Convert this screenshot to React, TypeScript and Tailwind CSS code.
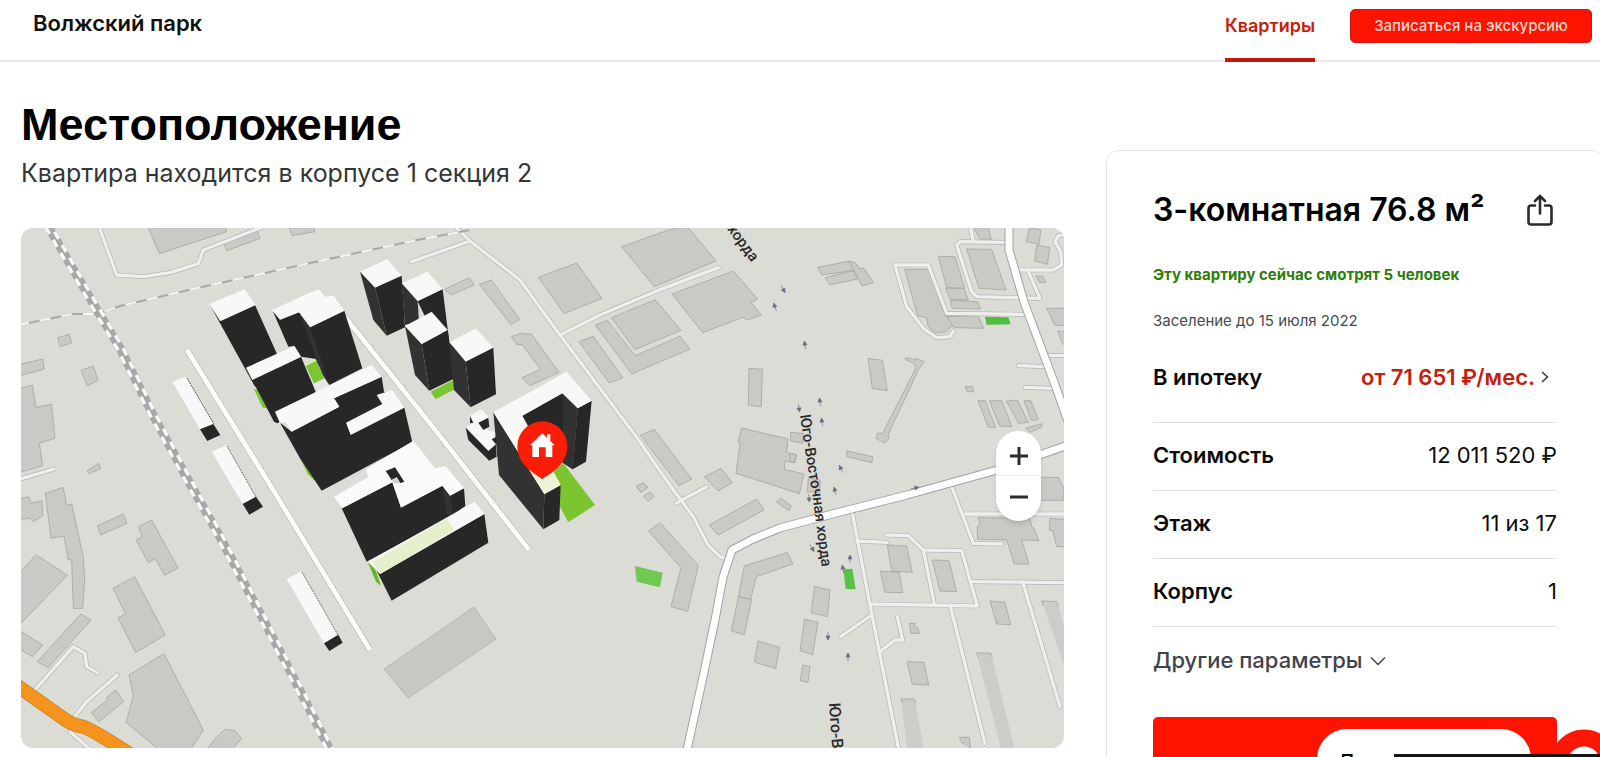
import React from "react";

type Lines = string[];

/* Map pieces are digitised on tiles drawn at three units per map pixel. */
function Tile({ x, y, children }: { x: number; y: number; children: React.ReactNode }) {
  return <g transform={`translate(${x} ${y}) scale(0.33333)`}>{children}</g>;
}

const buildingTiles: { x: number; y: number; shapes: Lines }[] = [
  {
    x: 20, y: 225, shapes: [
      "385,8 418,86 620,20 616,8", "612,56 712,17 720,40 620,77", "808,8 816,32 885,20 880,8",
      "113,338 148,328 155,354 120,365", "183,436 220,423 234,466 202,483", "0,418 68,402 73,432 0,452",
      "0,490 37,480 48,547 95,538 105,640 58,655 68,722 0,742", "201,737 237,715 242,731 208,746",
    ],
  },
  {
    x: 20, y: 480, shapes: [
      "76,40 130,22 140,76 155,72 190,230 194,300 188,385 160,385 155,240 144,238 132,168 93,175",
      "0,56 27,50 33,70 66,62 68,108 40,125 28,115 0,118", "232,137 310,102 321,130 242,165",
      "355,140 395,120 474,264 434,286 406,236 385,248 348,180 367,170",
      "279,325 344,290 436,465 347,518 294,413 317,402", "0,278 48,224 142,286 0,433",
      "52,545 182,402 213,420 85,563", "0,453 68,495 37,530 0,508",
      "327,585 432,521 550,750 510,812 420,812 318,727 340,648",
      "214,698 262,660 260,652 288,630 311,665 236,726", "562,806 590,770 615,748 645,752 664,775 640,806",
    ],
  },
  {
    x: 520, y: 225, shapes: [
      "305,65 440,17 480,8 505,8 588,108 403,185", "55,157 170,114 246,220 132,266",
      "456,207 640,138 713,222 693,232 724,270 683,285 668,277 548,323", "274,278 406,224 483,316 345,374",
      "226,300 262,286 345,392 480,334 510,372 335,447", "177,350 220,334 308,458 268,474",
      "687,430 727,433 724,545 685,541", "361,631 403,613 515,762 477,782",
      "665,609 804,642 800,682 830,690 824,713 795,708 793,733 852,747 838,806 648,745 660,655 654,650",
      "553,755 603,730 637,773 594,798", "351,787 372,775 383,787 362,800", "812,622 850,625 848,655 812,648",
      "371,814 390,801 403,815 385,828",
    ],
  },
  {
    x: 350, y: 240, shapes: [
      "284,148 358,113 372,135 303,165", "388,133 424,120 509,238 483,254",
      "484,290 512,280 545,283 627,397 540,437 516,413 571,388 517,314 500,313",
    ],
  },
  {
    x: 790, y: 225, shapes: [
      "83,127 180,108 202,135 96,150", "105,158 190,137 202,162 120,180", "178,110 195,112 208,130 222,130 250,173 216,183",
      "344,133 417,133 465,272 490,280 488,300 470,320 430,325 413,300 410,278 383,273",
      "445,94 495,95 524,190 470,188", "466,190 522,190 535,225 480,222", "480,225 563,230 572,252 487,250",
      "470,275 565,272 581,310 492,308", "530,72 605,73 648,195 567,190", "552,8 595,8 604,43 568,42",
      "718,8 753,15 747,58 709,50", "740,60 780,68 772,118 734,108", "738,153 758,153 767,173 747,172",
      "770,250 826,250 826,302 794,300", "803,318 826,320 826,365 815,350", "234,400 277,406 292,497 247,491",
      "345,400 360,398 370,405 378,400 402,410 385,435 295,628 296,640 285,655 258,640 262,625 278,625 378,428 372,415 348,405",
      "170,678 248,695 246,713 171,695", "525,485 547,485 551,500 531,500", "564,527 586,527 617,607 595,607",
      "598,527 635,527 666,605 629,603", "649,528 682,525 715,592 686,595", "702,527 722,527 745,583 724,587",
      "707,610 755,596 755,606 720,622", "0,685 18,688 14,712 0,712", "55,758 90,765 90,803 52,800",
      "745,757 805,757 822,790 822,826 745,826",
    ],
  },
  {
    x: 580, y: 480, shapes: [
      "388,135 530,57 552,90 415,165", "205,153 240,128 355,256 323,394 273,380 303,263",
      "590,67 602,54 634,78 627,92", "493,257 622,218 639,252 529,290 512,358 475,350",
      "475,350 515,358 493,464 454,453", "534,483 599,502 587,566 523,546", "704,319 750,330 742,410 693,398",
      "674,417 714,427 698,524 660,512", "668,555 690,560 684,607 661,602", "170,18 190,8 202,24 182,37",
    ],
  },
  {
    x: 800, y: 480, shapes: [
      "262,195 320,198 337,277 275,273", "241,273 298,277 308,338 255,337", "397,240 447,242 470,335 420,333",
      "570,363 615,367 632,434 590,432", "321,545 372,547 386,615 337,613", "478,772 508,772 512,808 500,795 487,790",
      "328,430 345,430 345,442 354,445 358,460 333,460",
      "535,113 690,115 695,140 702,145 717,182 665,180 687,252 643,252 620,180 533,178 531,140 540,135",
      "750,115 796,118 796,200 770,200 758,152 748,150",
    ],
  },
];

const minorRoads: { x: number; y: number; lines: Lines }[] = [
  { x: 20, y: 225, lines: ["235,0 290,150 370,155 450,143 535,116 550,75 730,5", "0,762 102,732"] },
  { x: 20, y: 480, lines: ["40,635 160,500 195,520 200,560 232,578", "160,715 200,665 292,585", "150,755 215,812"] },
  {
    x: 350, y: 240, lines: [
      "185,65 360,3 510,120 630,285 855,585 970,750 1030,830 1074,915 1110,950 1131,958",
      "360,3 315,-40", "630,285 750,225 915,155 1105,83", "978,790 1070,740",
    ],
  },
  {
    x: 790, y: 225, lines: [
      "315,120 415,120 470,265 700,268", "315,120 350,245 400,310 440,338 480,335 490,318",
      "645,52 510,50 500,60 545,200 560,215 750,220 715,140", "685,135 790,135 815,120 812,80 795,50 805,32 826,30",
      "540,0 550,48", "685,422 765,425", "705,487 790,490", "775,392 826,392",
    ],
  },
  {
    x: 800, y: 480, lines: [
      "157,100 215,400 297,812", "170,183 262,187", "260,165 325,167 370,210 485,212 532,378 210,372",
      "370,210 403,372", "450,375 555,790", "510,305 796,308", "668,305 780,680", "215,405 122,470",
      "240,515 285,480 308,480 292,410", "455,20 520,190 605,192", "495,102 796,102",
    ],
  },
];

const mainRoads = [
  "1009,226 1009,250 1024,302 1054,382 1069,424",
  "1068,445 997,470 907,495 840,512 780,528 753,539 732,550 723,577 715,620 703,677 687,750",
];

const yardRoads = ["187,350 275,493 370,650", "345,317 440,436 529,550"];

const rail = "48,226 87,293 100,315 120,348 153,415 188,480 220,537 253,600 287,665 320,730 331,752";
const dashedRail = "18,325 73,314 97,314 120,306 193,289 310,263 417,240 470,230";

const laneArrows: [number, number, number][] = [
  [805, 345, -10], [820, 402, -8], [799, 408, 172], [822, 422, -8], [841, 469, -25], [835, 491, -12], [915, 488, 80],
  [783, 289, 150], [775, 307, -20], [809, 498, 175], [812, 548, 150], [850, 559, 0], [843, 569, -10],
  [828, 636, 180], [848, 657, 0],
];

type Face = [fill: string, points: string];
const ROOF = "#f8f8f8";
const WALL = "#272727";
const SIDE = "#323233";
const LAWN = "#7bc52f";

const blocks: { x: number; y: number; faces: Face[] }[] = [
  {
    x: 20, y: 225, faces: [
      [ROOF, "457,470 497,456 580,597 540,613"], [WALL, "540,613 580,597 601,630 562,648"],
      [ROOF, "575,680 620,660 708,815 668,837"], [WALL, "668,837 708,815 729,845 688,869"],
    ],
  },
  {
    x: 200, y: 240, faces: [
      [WALL, "30,195 60,243 165,195 230,340 235,420 165,440"], [ROOF, "28,192 134,148 167,195 62,243"],
      [LAWN, "162,448 175,448 200,505 188,503"], [LAWN, "300,655 312,655 345,722 325,705"],
      [WALL, "218,212 240,240 297,217 360,300 350,357 303,350 283,318 265,320"],
      [WALL, "297,217 330,262 433,212 487,385 388,435 350,365"], [SIDE, "297,217 330,262 388,435 368,405"],
      [ROOF, "216,210 355,147 375,170 400,167 433,212 330,262 297,217 240,238"],
      ["#e6e6e2", "342,430 372,418 388,438 346,455"], [LAWN, "315,372 347,357 372,415 342,430"],
      ["#e3edc8", "315,372 347,357 349,362 317,378"],
      [WALL, "138,385 157,420 303,350 347,455 250,540 232,550 222,545"], [ROOF, "138,383 283,318 303,350 157,420"],
      [WALL, "402,475 545,410 552,455 613,503 637,607 365,752 345,722 300,655 240,548 275,575 418,500"],
      [ROOF, "225,515 515,375 545,410 402,475 418,500 275,575 255,545 240,550"],
      [ROOF, "438,548 547,492 530,465 577,450 613,503 452,585"],
    ],
  },
  {
    x: 270, y: 400, faces: [
      [ROOF, "50,538 95,514 205,704 162,730"], [WALL, "162,730 205,704 218,728 178,753"],
      ["#dedede", "192,290 285,208 305,240"],
      [WALL, "215,325 367,247 393,322 517,257 540,287 582,265 586,318 540,350 290,485"],
      [SIDE, "517,257 540,287 550,345 530,345"],
      ["#fafafa", "192,290 295,232 288,208 430,122 495,205 527,198 582,265 540,287 517,257 393,323 367,247 217,325"],
      [WALL, "347,213 375,202 403,245 390,250 380,232 365,240"], ["#d2d2d2", "365,240 380,232 392,250 372,250"],
      ["#65b51e", "293,485 308,485 333,557 318,545"], [WALL, "308,488 330,522 643,342 655,428 365,602"],
      [ROOF, "293,485 615,305 643,342 330,522"], ["#e6efcb", "308,485 530,355 553,390 330,522"],
    ],
  },
  {
    x: 350, y: 240, faces: [
      [ROOF, "30,95 112,57 155,107 75,143"], [SIDE, "30,95 75,143 110,287 70,240"], [WALL, "75,143 155,107 165,262 110,287"],
      [ROOF, "155,130 233,95 278,148 203,184"], [SIDE, "155,130 203,184 207,245 165,255"], [WALL, "203,184 278,148 297,300 230,240"],
      [SIDE, "165,258 215,312 238,452 195,405"], [WALL, "215,312 293,270 315,415 238,452"], [ROOF, "165,258 245,215 293,270 215,312"],
      [LAWN, "242,455 315,418 315,447 257,478"],
      [ROOF, "298,307 378,265 430,323 347,365"], [SIDE, "298,307 347,365 362,502 312,450"], [WALL, "347,365 430,323 438,463 362,502"],
      [ROOF, "358,528 395,508 418,535 400,550 415,572 437,575 430,595 438,615 418,635 348,560 370,550"],
      [WALL, "347,563 415,633 438,613 440,650 418,662 355,600"], [WALL, "385,548 415,533 418,560 400,570"],
      [WALL, "360,528 370,548 360,550"], [WALL, "425,598 440,590 440,615"],
      [LAWN, "605,695 640,670 735,795 655,847 630,800"],
      [WALL, "517,527 637,460 683,505 668,688 650,675 517,600"], [SIDE, "637,460 683,505 668,688 640,670"],
      [WALL, "683,505 725,482 708,665 668,688"], [SIDE, "430,517 583,762 580,868 447,705"],
      [WALL, "583,762 632,735 628,840 580,868"],
      [ROOF, "430,517 650,395 725,482 683,505 637,460 517,527 632,735 583,762"],
      ["#eef2d8", "525,668 595,668 632,735 583,762"],
    ],
  },
];

function LocationMap() {
  return (
    <svg viewBox="21 228 1043 520" className="block h-auto w-full rounded-xl" role="img" aria-label="Карта района">
      <rect x="20" y="227" width="1046" height="523" fill="#dbdcd6" />
      {buildingTiles.map((t, i) => (
        <Tile key={i} x={t.x} y={t.y}>
          {t.shapes.map((s) => (
            <polygon key={s} points={s} fill="#cbc9c5" stroke="#9d9c99" strokeWidth="2" />
          ))}
        </Tile>
      ))}
      <polygon points="384,669 474,607 496,639 408,698" fill="#c9c7c3" stroke="#a5a4a1" strokeWidth="0.6" />
      <Tile x={800} y={480}>
        <g fill="#cdccc8">
          <polygon points="530,518 573,520 645,812 605,812" />
          <polygon points="303,657 344,657 372,812 322,812" />
          <polygon points="725,363 770,365 796,450 796,570" />
        </g>
        <g fill="none" stroke="#9d9c99" strokeWidth="2">
          <path d="M535 535l-5-17 43 2 4 14M308 670l-5-13 40 0 3 12M730 378l-5-15 45 2 5 14" />
        </g>
      </Tile>
      {minorRoads.map((t, i) => (
        <Tile key={i} x={t.x} y={t.y}>
          <g fill="none" strokeLinejoin="round" strokeLinecap="round">
            {t.lines.map((l) => <polyline key={l} points={l} stroke="#b3b3b4" strokeWidth="14" />)}
            {t.lines.map((l) => <polyline key={l} points={l} stroke="#efefed" strokeWidth="10" />)}
          </g>
        </Tile>
      ))}
      <g fill="none">
        <polyline points={dashedRail} stroke="#aaa9a6" strokeWidth="2" />
        <polyline points={dashedRail} stroke="#f7f7f6" strokeWidth="2" strokeDasharray="11 11" />
        <polyline points={rail} stroke="#a9a8a9" strokeWidth="9" />
        <polyline points={rail} stroke="#f9f9f9" strokeWidth="3.4" strokeDasharray="8 7" transform="translate(-2.500 1)" />
        <polyline points={rail} stroke="#f9f9f9" strokeWidth="3.4" strokeDasharray="8 7" strokeDashoffset="7" transform="translate(2.500 -1)" />
      </g>
      {yardRoads.map((r) => (
        <g key={r} fill="none">
          <polyline points={r} stroke="#a9a8a6" strokeWidth="6" />
          <polyline points={r} stroke="#fdfdfc" strokeWidth="5" />
        </g>
      ))}
      <Tile x={800} y={480}>
        <polygon points="130,268 157,266 167,328 137,327" fill="#58c244" />
      </Tile>
      <Tile x={580} y={480}>
        <polygon points="165,258 248,278 240,322 170,305" fill="#70ca52" />
      </Tile>
      <Tile x={790} y={225}>
        <polygon points="585,275 655,277 662,298 590,299" fill="#4fbd3d" />
      </Tile>
      {mainRoads.map((r) => (
        <g key={r} fill="none" strokeLinejoin="round">
          <polyline points={r} stroke="#a2a2a3" strokeWidth="9" />
          <polyline points={r} stroke="#fefefe" strokeWidth="7" />
        </g>
      ))}
      <Tile x={20} y={480}>
        <path d="M-10 616 L140 722 Q160 735 185 739 Q210 744 330 822" fill="none" stroke="#cc8428" strokeWidth="42" />
        <path d="M-10 616 L140 722 Q160 735 185 739 Q210 744 330 822" fill="none" stroke="#f4931d" strokeWidth="37" />
      </Tile>
      {laneArrows.map(([x, y, r], i) => (
        <path key={i} d="M0 4V-4M-2 0L0 -4L2 0Z" transform={`translate(${x} ${y}) rotate(${r})`} fill="#666a80" stroke="#666a80" strokeWidth="0.6" />
      ))}
      {blocks.map((b, i) => (
        <Tile key={i} x={b.x} y={b.y}>
          {b.faces.map(([fill, pts], j) => <polygon key={j} points={pts} fill={fill} />)}
        </Tile>
      ))}
      <g fill="none" stroke="#333" strokeWidth="1" strokeDasharray="1 1">
        <path d="M187 378L214 424M227 446L256 497M302 572L338 635" />
      </g>
      <g fill="#2b2b2f" fontWeight="500" style={{ fontFamily: 'Roboto, "Liberation Sans", sans-serif' }}>
        <path id="east-chord" d="M800 415Q805 452 812 492L824 585" fill="none" />
        <text fontSize="15"><textPath href="#east-chord">Юго-Восточная хорда</textPath></text>
        <text fontSize="16" transform="translate(829 703) rotate(86)">Юго-В</text>
        <text fontSize="15" transform="translate(727 229) rotate(54)">хорда</text>
      </g>
      <Tile x={350} y={240}>
        <path d="M577 718C562 704 502 680 502 619A75 75 0 0 1 652 619C652 680 592 704 577 718Z" fill="#fb1d06" />
        <path d="M540 616L577 580L591 593V583H601V603L614 616H607V651H587V622H567V651H547V616Z" fill="#fff" />
      </Tile>
    </svg>
  );
}

function ShareIcon() {
  return (
    <svg viewBox="0 0 26 32" className="h-8 w-[26px]" fill="none" stroke="#2b2b2b" strokeWidth="2.6" strokeLinecap="round" strokeLinejoin="round">
      <path d="M8 11.500H4A2.500 2.500 0 0 0 1.500 14V28A2.500 2.500 0 0 0 4 30.500H22A2.500 2.500 0 0 0 24.500 28V14A2.500 2.500 0 0 0 22 11.500H18" />
      <path d="M13 19.500V2M8 7L13 2L18 7" />
    </svg>
  );
}

const params = [
  { label: "Стоимость", value: "12 011 520 ₽" },
  { label: "Этаж", value: "11 из 17" },
  { label: "Корпус", value: "1" },
];

function FlatCard() {
  return (
    <aside className="mt-[88px] -mr-1 w-[498px] shrink-0 rounded-xl border border-[#e6e6e8] pt-[43px] pr-[46px] pl-[46px]">
      <div className="flex items-center justify-between">
        <h2 className="text-[32px] leading-8 font-semibold whitespace-nowrap text-black">3-комнатная 76.8 м²</h2>
        <button type="button" aria-label="Поделиться" className="mr-1"><ShareIcon /></button>
      </div>
      <p className="mt-[37px] text-[15px] leading-6 font-bold text-[#2e7d0b]">Эту квартиру сейчас смотрят 5 человек</p>
      <p className="mt-6 text-[15px] leading-5 text-[#4a4a52]">Заселение до 15 июля 2022</p>
      <dl className="mt-5 text-[22px] leading-8 text-[#0c0c0c]">
        <div className="flex items-center justify-between border-b border-[#e2e2e4] pt-[10px] pb-[29px]">
          <dt className="font-semibold">В ипотеку</dt>
          <dd>
            <a href="#mortgage" className="flex items-center gap-[6px] pr-2 font-semibold text-[#c4200c]">
              от 71 651 ₽/мес.
              <svg viewBox="0 0 8 12" className="h-3 w-2" fill="none" stroke="#3a3a3a" strokeWidth="1.500"><path d="M1 1L6.500 6L1 11" /></svg>
            </a>
          </dd>
        </div>
        {params.map((p) => (
          <div key={p.label} className="flex h-[68px] items-center justify-between border-b border-[#e2e2e4] pb-[3px]">
            <dt className="font-semibold">{p.label}</dt>
            <dd>{p.value}</dd>
          </div>
        ))}
      </dl>
      <button type="button" className="flex h-[67px] items-center gap-2 text-[22px] font-medium text-[#3f434c]">
        Другие параметры
        <svg viewBox="0 0 16 10" className="h-[10px] w-4" fill="none" stroke="#3f434c" strokeWidth="1.500"><path d="M1 1.500L8 8.500L15 1.500" /></svg>
      </button>
      <button type="button" aria-label="Забронировать" className="mt-[23px] block h-16 w-full rounded-[5px] bg-[#fe1200]" />
    </aside>
  );
}

export default function App() {
  return (
    <div className="relative h-screen overflow-hidden bg-white font-['Inter','Liberation_Sans',sans-serif] text-black">
      <header className="flex h-[62px] items-start justify-between border-b-2 border-[#e9e9e9] pr-2 pl-[33px]">
        <a href="#home" className="pt-[7px] text-[22px] leading-8 font-semibold text-[#111]">Волжский парк</a>
        <nav className="flex items-start gap-[35px]">
          <a href="#flats" className="h-[62px] border-b-4 border-[#c01a10] pt-[10px] text-[18px] leading-8 font-semibold text-[#c4200c]">Квартиры</a>
          <button type="button" className="mt-[9px] h-[34px] w-[242px] rounded-[5px] border border-[#d31408] bg-[#fe1200] text-[15px] font-medium text-[#ffd9cf]">
            Записаться на экскурсию
          </button>
        </nav>
      </header>
      <div className="flex items-start gap-[42px] pl-[21px]">
        <main className="min-w-0 flex-1 pt-9">
          <h1 className="font-['Liberation_Sans',sans-serif] text-[45px] leading-[54px] font-bold">Местоположение</h1>
          <p className="mt-[3px] text-[25px] leading-9 text-[#333634]">Квартира находится в корпусе 1 секция 2</p>
          <div className="relative mt-[37px]">
            <LocationMap />
            <div className="absolute top-[203px] right-[23px] flex w-[45px] flex-col divide-y divide-[#f2f2f2] rounded-full bg-white shadow-md">
              <button type="button" aria-label="Приблизить" className="flex h-[45px] items-center justify-center pt-[6px]">
                <svg viewBox="0 0 18 18" className="size-[18px]" stroke="#2b2b2b" strokeWidth="3"><path d="M0 9H18M9 0V18" /></svg>
              </button>
              <button type="button" aria-label="Отдалить" className="flex h-[45px] items-center justify-center pb-1">
                <svg viewBox="0 0 18 18" className="size-[18px]" stroke="#2b2b2b" strokeWidth="3"><path d="M0 9H18" /></svg>
              </button>
            </div>
          </div>
        </main>
        <FlatCard />
      </div>
      <div className="absolute right-0 bottom-0 flex h-[28px] items-start overflow-hidden">
        <div className="mr-[25px] flex h-16 w-[214px] items-start rounded-[30px] bg-white pt-[21px] pl-5">
          <span className="text-[22px] leading-6 font-medium">Дом</span>
        </div>
        <svg viewBox="0 0 44 29" className="h-[29px] w-11"><circle cx="28" cy="34" r="25" fill="none" stroke="#fb1605" strokeWidth="17" /></svg>
        <div className="absolute right-0 bottom-0 h-[3px] w-[206px] bg-[#161616]" />
      </div>
    </div>
  );
}
